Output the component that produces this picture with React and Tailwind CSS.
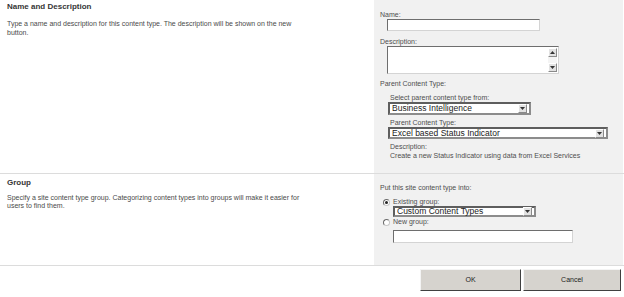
import React from 'react';

const font = { fontFamily: '"Liberation Sans", Arial, sans-serif' };

function TextBox({ className }) {
  return (
    <div
      className={`bg-white border border-t-[#6e6e6e] border-l-[#6e6e6e] border-r-[#d4d4d4] border-b-[#d4d4d4] ${className}`}
    />
  );
}

function ArrowBtn({ up }) {
  return (
    <div className="w-[9px] h-[9px] bg-[#e2e2e2] border border-t-white border-l-white border-r-[#8a8a8a] border-b-[#8a8a8a] flex items-center justify-center">
      <svg width="5" height="3" viewBox="0 0 5 3">
        {up ? <path d="M0 3 L2.5 0 L5 3 Z" fill="#333" /> : <path d="M0 0 L2.5 3 L5 0 Z" fill="#333" />}
      </svg>
    </div>
  );
}

function Select({ value, className }) {
  return (
    <div
      className={`flex items-center bg-white border-2 border-t-[#5e5e5e] border-l-[#5e5e5e] border-r-[#8c8c8c] border-b-[#8c8c8c] pl-[2px] pr-[2px] ${className}`}
    >
      <span className="flex-1 text-[8.5px] leading-none text-[#222] truncate">{value}</span>
      <ArrowBtn />
    </div>
  );
}

function Radio({ checked }) {
  return (
    <div className="w-[7px] h-[7px] rounded-full bg-white border border-t-[#6a6a6a] border-l-[#6a6a6a] border-r-[#c8c8c8] border-b-[#c8c8c8] flex items-center justify-center">
      {checked && <div className="w-[3px] h-[3px] rounded-full bg-[#222]" />}
    </div>
  );
}

function Label({ children, className = '' }) {
  return <div className={`text-[7px] leading-[8px] text-[#4e4e4e] ${className}`}>{children}</div>;
}

export default function App() {
  return (
    <div className="w-[624px] h-[297px] bg-white flex flex-col" style={font}>
      {/* Name and Description */}
      <div className="flex h-[174px] border-b border-[#dcdcdc]">
        <div className="w-[374px] pl-[7px] pt-[2px]">
          <div className="text-[8px] leading-[9px] font-bold text-[#363636]">Name and Description</div>
          <div className="mt-[8px] text-[7px] leading-[9px] text-[#4a4a4a]">
            Type a name and description for this content type. The description will be shown on the new
            <br />
            button.
          </div>
        </div>
        <div className="w-[249px] bg-[#f1f1f1] pl-[6px] pt-[10px]">
          <Label className="leading-[9px]">Name:</Label>
          <TextBox className="ml-[7px] w-[153px] h-[12px]" />
          <Label className="mt-[7px]">Description:</Label>
          <div className="ml-[7px] w-[172px] h-[28px] bg-white border border-t-[#6e6e6e] border-l-[#6e6e6e] border-r-[#d4d4d4] border-b-[#d4d4d4] flex justify-end pr-[1px] py-[1px]">
            <div className="flex flex-col justify-between bg-[#f4f4f4]">
              <ArrowBtn up />
              <ArrowBtn />
            </div>
          </div>
          <Label className="mt-[6px]">Parent Content Type:</Label>
          <div className="pl-[8px] pt-[6px]">
            <Label className="ml-[2px]">Select parent content type from:</Label>
            <Select value="Business Intelligence" className="w-[143px] h-[13px]" />
            <Label className="ml-[2px] mt-[4px]">Parent Content Type:</Label>
            <Select value="Excel based Status Indicator" className="w-[220px] h-[12px]" />
            <Label className="ml-[2px] mt-[3px] leading-[9px]">Description:</Label>
            <Label className="ml-[2px] leading-[9px]">Create a new Status Indicator using data from Excel Services</Label>
          </div>
        </div>
      </div>

      {/* Group */}
      <div className="flex h-[92px] border-b border-[#dcdcdc]">
        <div className="w-[374px] pl-[7px] pt-[4px]">
          <div className="text-[8px] leading-[9px] font-bold text-[#363636]">Group</div>
          <div className="mt-[7px] text-[7px] leading-[8px] text-[#4a4a4a]">
            Specify a site content type group. Categorizing content types into groups will make it easier for
            <br />
            users to find them.
          </div>
        </div>
        <div className="w-[249px] bg-[#f1f1f1] pl-[6px] pt-[10px]">
          <Label>Put this site content type into:</Label>
          <div className="pl-[3px] pt-[6px]">
            <div className="flex items-center gap-[3px] h-[8px]">
              <Radio checked />
              <Label>Existing group:</Label>
            </div>
            <Select value="Custom Content Types" className="ml-[10px] w-[143px] h-[11px]" />
            <div className="flex items-center gap-[3px] h-[8px] mt-[1px]">
              <Radio />
              <Label>New group:</Label>
            </div>
            <TextBox className="ml-[10px] mt-[4px] w-[180px] h-[13px]" />
          </div>
        </div>
      </div>

      {/* Buttons */}
      <div className="flex justify-end gap-[2px] pr-[3px] pt-[3px]">
        <button className="w-[101px] h-[22px] bg-[#d6d3ce] border border-t-[#f4f4f4] border-l-[#f4f4f4] border-r-[#404040] border-b-[#404040] text-[7px] text-[#222]">
          OK
        </button>
        <button className="w-[98px] h-[22px] bg-[#d6d3ce] border border-t-[#f4f4f4] border-l-[#f4f4f4] border-r-[#404040] border-b-[#404040] text-[7px] text-[#222]">
          Cancel
        </button>
      </div>
    </div>
  );
}
